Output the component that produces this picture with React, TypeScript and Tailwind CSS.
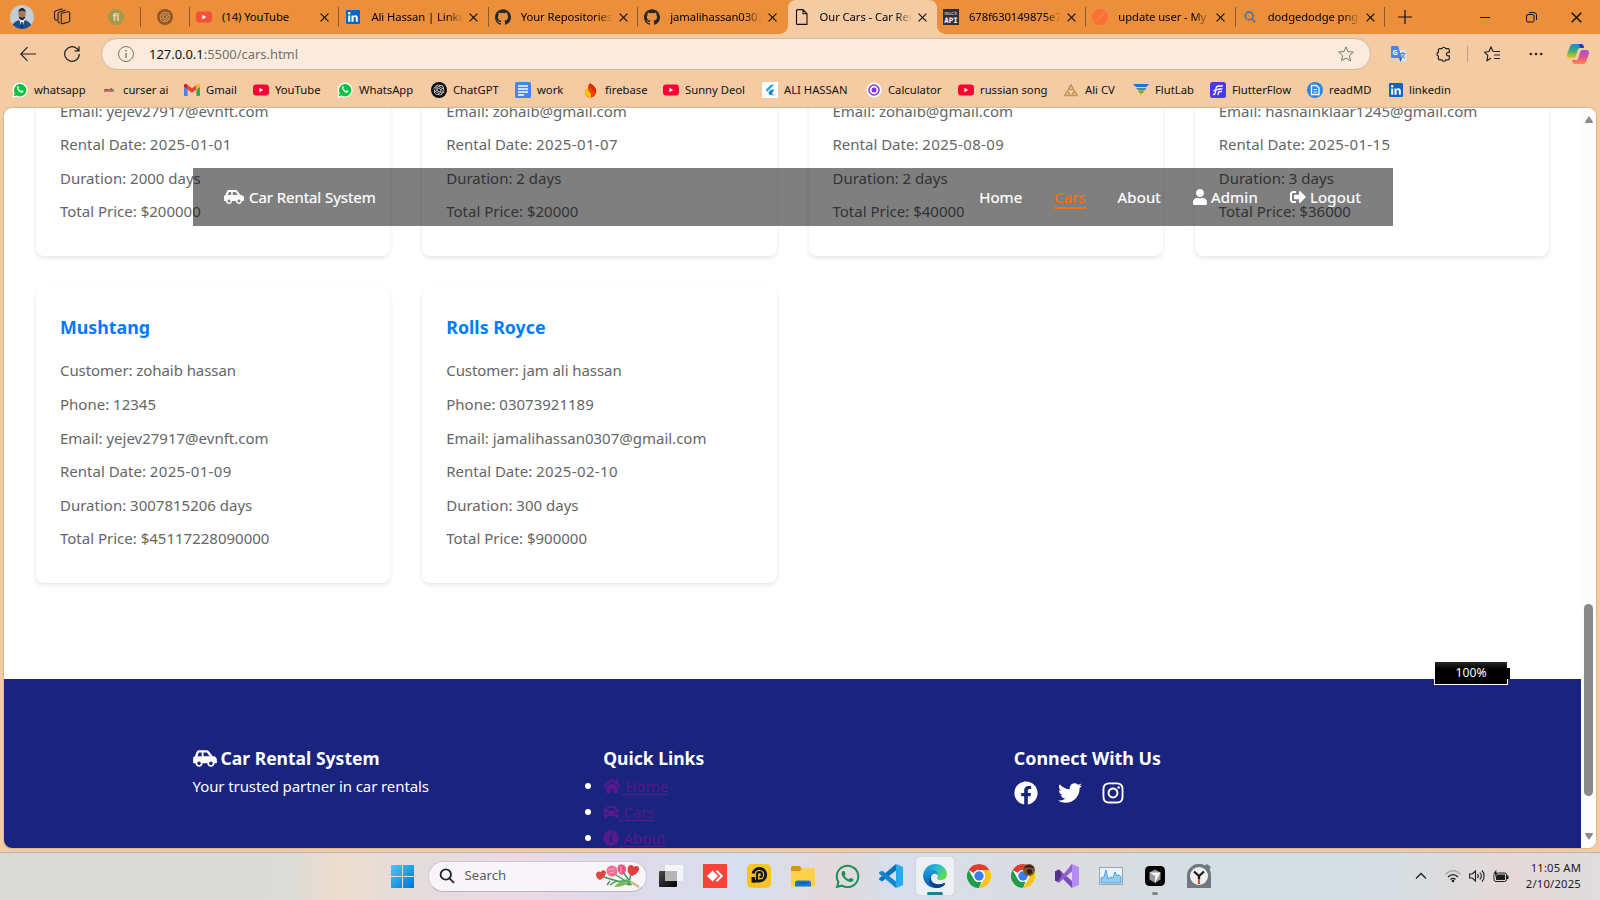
import React from "react";
import {
  FaCarSide, FaCar, FaUser, FaSignOutAlt, FaHome, FaInfoCircle, FaFacebook, FaTwitter, FaInstagram, FaWhatsapp,
} from "react-icons/fa";
import { SiPostman, SiOpenai, SiGithub, SiFlutter } from "react-icons/si";

type P = { className?: string };

const YouTube = ({ c = "#ff0033" }: { c?: string }) => (
  <svg viewBox="0 0 16 16" className="size-4 shrink-0"><rect x="0" y="2.5" width="16" height="11" rx="3" fill={c} /><path d="M6.4 5.8v4.4L10.2 8z" fill="#fff" /></svg>
);
const LinkedIn = () => (
  <svg viewBox="0 0 14 14" className="size-3.5 shrink-0"><rect width="14" height="14" rx="1" fill="#0a66c2" /><path d="M2.2 5.5h2v6.2h-2zM5.5 5.5h1.9v.9c.4-.7 1.1-1.1 2-1.1 1.800 0 2.400 1.100 2.400 2.900v3.500h-2V8.600c0-.9-.2-1.500-1-1.500s-1.200.6-1.200 1.500v3.100h-2.100z" fill="#fff" /><circle cx="3.200" cy="3.300" r="1.200" fill="#fff" /></svg>
);
const WhatsBadge = () => (
  <svg viewBox="0 0 16 16" className="size-4 shrink-0"><path d="M.5 15.700l1-4A7.500 7.500 0 1 1 4.500 14.700z" fill="#fff" /><path d="M1.800 14.300l.9-3.200A6.200 6.200 0 1 1 5 13.500z" fill="#0ac143" /><path d="M5.300 4.300c.5-.5 1-.3 1.200.2l.4 1c.1.300-.2.600-.5 1 .7 1.300 1.600 2 2.700 2.500.3-.4.600-.8.900-.7l1.300.7c.300.200.1 1.100-.5 1.500-2.600 1.500-7-3.400-5.500-6.200z" fill="#fff" /></svg>
);
const Gmail = () => (
  <svg viewBox="0 0 16 12" className="h-3 w-4 shrink-0"><path d="M1 12h2.600V5.500L0 2.800V11a1 1 0 0 0 1 1z" fill="#4285f4" /><path d="M12.400 12H15a1 1 0 0 0 1-1V2.800l-3.600 2.700z" fill="#34a853" /><path d="M3.600 5.500V1L8 4.300 12.400 1v4.500L8 8.800z" fill="#ea4335" /><path d="M0 2.800V1.500C0 .1 1.500-.5 2.600.3l1 .7v4.500z" fill="#c5221f" /><path d="M12.400 1l1-.7c1.100-.8 2.600-.2 2.600 1.200v1.300l-3.600 2.700z" fill="#fbbc04" /></svg>
);
const GPT = ({ bg, fg }: { bg: string; fg: string }) => (
  <svg viewBox="0 0 16 16" className="size-4 shrink-0"><circle cx="8" cy="8" r="8" fill={bg} /><g transform="translate(2.500 2.500)"><SiOpenai size={11} color={fg} /></g></svg>
);
const Docs = () => (
  <svg viewBox="0 0 16 16" className="size-4 shrink-0"><rect width="16" height="16" rx="1.500" fill="#4285f4" /><path d="M3 4h10M3 7h10M3 10h10M3 13h6" stroke="#fff" strokeWidth="1.500" /></svg>
);
const Fire = () => (
  <svg viewBox="0 0 16 16" className="size-4 shrink-0"><path d="M7 1c5 3 7 6 6 10-1 3-3 4.500-6 4.500C3 15.500 1.500 11 3 7c1 1 1.500 1 2 1 0-3 0-5 2-7z" fill="#dd2c00" /><path d="M3 6c-2 5 0 9.500 5 9.500C9 11 6 9 3 6z" fill="#ffc400" /><path d="M5 8c3 1 4.500 4 3 7.500 3-.5 4-2 4-4L6 4z" fill="#ff6a00" opacity=".45" /></svg>
);
const Flutter = () => (
  <svg viewBox="0 0 16 16" className="size-4 shrink-0"><rect width="16" height="16" fill="#fff" /><g transform="translate(2.500 2.500)"><SiFlutter size={11} color="#27a5ee" /></g><path d="M7.200 10.800l2.200-2.200 3 0-4.400 4.400h-1z" fill="#0b5394" opacity=".6" /></svg>
);
const Target = () => (
  <svg viewBox="0 0 16 16" className="size-4 shrink-0"><circle cx="8" cy="8" r="7.500" fill="#fff" /><circle cx="8" cy="8" r="5" fill="none" stroke="#7a35dd" strokeWidth="1.500" /><circle cx="8" cy="8" r="2.500" fill="#7a35dd" /></svg>
);
const Tent = () => (
  <svg viewBox="0 0 16 16" className="size-4 shrink-0" fill="none" stroke="#c09858" strokeWidth="1.500"><path d="M5.500 7L8 3l2.500 4M2 13l2.500-4L7 13M9 13l2.500-4 2.500 4M1 13.500h14M5 7.500h6" /></svg>
);
const FlutLab = () => (
  <svg viewBox="0 0 16 16" className="size-4 shrink-0"><path d="M0 2h16l-2.500 3H3z" fill="#1976d2" /><path d="M3 6h10.500l-2 2.500H5.500z" fill="#4a8a8a" /><path d="M5.500 9.200h5.500l-4 6V11z" fill="#f0d000" /><path d="M5 9.200h6l-1.500 2H7z" fill="#679a55" /></svg>
);
const FlutterFlow = () => (
  <svg viewBox="0 0 16 16" className="size-4 shrink-0"><rect width="16" height="16" rx="2.500" fill="#4b39ef" /><path d="M3.500 12.500c1 0 1.500-.5 1.700-1.500l.8-4.500c.3-1.500 1-2.500 2.500-2.500h4M4 8.500c3 0 3-1.500 5.500-1.500h2.500M8 12.500c.3-2 .3-3 2-3h1.500" stroke="#fff" strokeWidth="1.300" fill="none" strokeLinecap="round" /></svg>
);
const ReadMD = () => (
  <svg viewBox="0 0 16 16" className="size-4 shrink-0"><circle cx="8" cy="8" r="8" fill="#2f86dd" /><path d="M4.500 3.500h5l2.500 2.500v6.500h-7.500z" fill="none" stroke="#fff" strokeWidth="1.300" /><path d="M6.500 7.500h3.500M6.500 10h3.500" stroke="#fff" /></svg>
);
const MockApi = () => (
  <svg viewBox="0 0 16 16" className="size-4 shrink-0"><rect width="16" height="16" fill="#2d2d33" /><text x="8" y="6" fontSize="5.500" textAnchor="middle" fill="#ddd" fontFamily="Liberation Mono">mock</text><text x="8" y="13.800" fontSize="7.500" fontWeight="700" textAnchor="middle" fill="#fff" fontFamily="DejaVu Sans Mono">API</text></svg>
);
const Page = () => (
  <svg viewBox="0 0 16 16" className="size-4 shrink-0" fill="none" stroke="#111" strokeWidth="1.100"><path d="M3.500.6h5.500l4 4.200v10.600h-9.500a1 1 0 0 1-1-1V1.600a1 1 0 0 1 1-1zM9 .8v4h4" /></svg>
);
const Search = ({ c, className }: { c: string; className: string }) => (
  <svg viewBox="0 0 16 16" className={className} fill="none" stroke={c} strokeWidth="1.800"><circle cx="6.800" cy="6.500" r="5.200" /><path d="M10.600 10.400l4.400 4.600" /></svg>
);
const Close = ({ className = "size-[9px]" }: P) => (
  <svg viewBox="0 0 9 9" className={className} stroke="#111" strokeWidth="1.200" fill="none"><path d="M.6.6l7.800 7.800M8.400.6L.6 8.400" /></svg>
);

const tabs = [
  { icon: <YouTube c="#f4513a" />, t: "(14) YouTube", fade: false },
  { icon: <LinkedIn />, t: "Ali Hassan | LinkedIn", fade: true },
  { icon: <SiGithub size={16} color="#24292f" />, t: "Your Repositories", fade: true },
  { icon: <SiGithub size={16} color="#24292f" />, t: "jamalihassan0307", fade: true },
  { icon: <Page />, t: "Our Cars - Car Rental", fade: true, active: true },
  { icon: <MockApi />, t: "678f630149875e7", fade: true },
  { icon: <SiPostman size={16} color="#ff6c37" />, t: "update user - My W", fade: true },
  { icon: <Search c="#1a6fd0" className="size-3" />, t: "dodgedodge png i", fade: true },
];

function TabBar() {
  return (
    <div className="flex h-[34px] items-center bg-[#eb8f3b]">
      <div className="ml-[10px] size-6 shrink-0 overflow-hidden rounded-full bg-[#c3ccd4]">
        <svg viewBox="0 0 24 24"><path d="M2 22c1-5 5-6 7-7h6c3 1 6 3 7 7v2H2z" fill="#1d4f86" /><path d="M9 14l3 9 3-9z" fill="#eef" /><path d="M11.300 17h1.400l.6 6h-2.600z" fill="#17365c" /><ellipse cx="12" cy="9" rx="3.600" ry="5.500" fill="#a87860" /><path d="M8.300 7.500c0-6 7.500-6 7.400 0-1-2.500-6.400-2.500-7.400 0zM8.700 11.500c1 5 5.600 5 6.600 0-1.500 1.500-5.100 1.500-6.600 0z" fill="#29211f" /></svg>
      </div>
      <svg viewBox="0 0 18 18" className="ml-[19px] size-[18px] shrink-0" fill="none" stroke="#222" strokeWidth="1.100"><path d="M8.200 6.500a1 1 0 0 1 .7-1.200l5.800-1.500a1.500 1.500 0 0 1 2 1.500v7.200a1.500 1.500 0 0 1-1.200 1.500l-5.500 1.600a1.300 1.300 0 0 1-1.800-1.300zM7 15l-1-.3a2 2 0 0 1-1-1.500V6a2 2 0 0 1 1.500-1.800L12.500 2M4 12.500l-1.500-.8a2 2 0 0 1-1-1.500V4.500A2 2 0 0 1 3 2.800L9.500.9" /></svg>
      <div className="ml-[37px] flex size-4 items-center justify-center rounded-full bg-[#a19a4c] text-[10px] font-bold text-[#f5d2a8]">fi</div>
      <div className="ml-4 h-5 w-px bg-[#8e5a2b]" />
      <div className="ml-4 w-4"><GPT bg="#8e5726" fg="#eda565" /></div>
      <div className="ml-4 h-5 w-px shrink-0 bg-[#8e5a2b]" />
      {tabs.map((t, i) => (
        <div
          key={i}
          className={
            "relative flex h-[34px] w-[149.400px] shrink-0 items-center " +
            (t.active ? "rounded-t-lg bg-[#f4cba3]" : "")
          }
        >
          {t.active && (
            <>
              <span className="absolute bottom-0 -left-2 size-2 bg-[radial-gradient(circle_at_0_0,transparent_7.500px,#f4cba3_8px)]" />
              <span className="absolute -right-2 bottom-0 size-2 bg-[radial-gradient(circle_at_100%_0,transparent_7.500px,#f4cba3_8px)]" />
            </>
          )}
          <div className="ml-[6px] flex w-4 justify-center">{t.icon}</div>
          <div
            className={
              "ml-[10px] w-[92px] overflow-hidden text-[11.250px] tracking-[-0.08px] whitespace-nowrap text-black " +
              (t.fade ? "[mask-image:linear-gradient(to_right,#000_76px,transparent_92px)]" : "")
            }
          >
            {t.t}
          </div>
          <div className="ml-[6px]"><Close /></div>
          {i !== 3 && i !== 4 && <div className="ml-auto h-5 w-px bg-[#8e5a2b]" />}
        </div>
      ))}
      <svg viewBox="0 0 14 14" className="ml-[13px] size-3.5 shrink-0" stroke="#111" strokeWidth="1.200"><path d="M7 0v14M0 7h14" /></svg>
      <svg viewBox="0 0 10 10" className="ml-[68px] size-2.5 shrink-0" stroke="#111"><path d="M0 5.500h10" /></svg>
      <svg viewBox="0 0 11 11" className="ml-9 size-[11px] shrink-0" stroke="#111" fill="none"><rect x=".5" y="2.500" width="7.500" height="7.500" rx="1.500" /><path d="M3 .6h5a2.500 2.500 0 0 1 2.500 2.500v5" /></svg>
      <div className="ml-[34px]"><Close className="size-[11px]" /></div>
    </div>
  );
}

function Toolbar() {
  return (
    <div className="flex h-10 items-center">
      <svg viewBox="0 0 16 16" className="ml-5 size-4 shrink-0" fill="none" stroke="#222" strokeWidth="1.200"><path d="M16 8H1M7.500 1.200L.8 8l6.700 6.800" /></svg>
      <svg viewBox="0 0 16 16" className="ml-7 size-4 shrink-0" fill="none" stroke="#222" strokeWidth="1.200"><path d="M15.300 8A7.300 7.300 0 1 1 12.800 2.500L14.800 4.500M15 .3v4.500h-4.500" /></svg>
      <div className="ml-[21px] flex h-8 w-[1270px] shrink-0 items-center rounded-full border border-[#cdb9a5] bg-[#fbebdc]">
        <svg viewBox="0 0 16 16" className="ml-4 size-4" fill="none" stroke="#7b746d"><circle cx="8" cy="8" r="7.500" /><path d="M8 7v5M8 4v1.500" strokeWidth="1.300" /></svg>
        <div className="ml-[15px] pt-px text-[13px] tracking-[-0.04px] text-[#77706a]"><span className="text-[#111]">127.0.0.1</span>:5500/cars.html</div>
        <svg viewBox="0 0 16 16" className="mr-4 ml-auto size-4" fill="none" stroke="#7b746d"><path d="M8 .9l2.100 4.700 5.200.5-3.900 3.500 1.100 5.100L8 12.100l-4.500 2.600 1.100-5.100L.7 6.100l5.200-.5z" strokeLinejoin="round" /></svg>
      </div>
      <svg viewBox="0 0 16 16" className="ml-[20px] size-4 shrink-0"><path d="M7 4h8.300v11.500H9z" fill="#dbe3ec" /><path d="M0 1a1 1 0 0 1 1-1h6l4 12H1a1 1 0 0 1-1-1z" fill="#4487f4" /><path d="M8 12h3l-1.500 4z" fill="#2852b8" /><text x="1.500" y="8.800" fontSize="7" fontWeight="700" fill="#fff" fontFamily="Noto Sans">G</text><path d="M9.500 7.500h5M12 6v1.500M10 12c2-1 3-2.500 3.300-4.500M10.500 8.500c1 2 2 3 3.500 3.500" stroke="#6a7c94" fill="none" /></svg>
      <svg viewBox="0 0 16 16" className="ml-[28px] size-4 shrink-0" fill="none" stroke="#222" strokeWidth="1.200"><path d="M4.700 2.700h2.300a1.900 1.900 0 0 1 3.700 0h2.300a1.300 1.300 0 0 1 1.300 1.300v2.400h-1.200a1.700 1.700 0 0 0 0 3.400h1.200v2.700a1.300 1.300 0 0 1-1.300 1.300h-2.300a1.900 1.900 0 0 1-3.700 0H4.700a1.300 1.300 0 0 1-1.300-1.300V10a1.900 1.900 0 0 1 0-3.700V4a1.300 1.300 0 0 1 1.300-1.300z" /></svg>
      <div className="ml-4 h-4 w-px bg-[#c29e7d]" />
      <svg viewBox="0 0 16 16" className="ml-4 size-4 shrink-0" fill="none" stroke="#222" strokeWidth="1.200"><path d="M9 5.500L7 1 5 5.500l-4.500.7 3.300 3.200L3 14.500l4-2.300M9 5.500h7M10 9h6M10 12.500h6" /></svg>
      <svg viewBox="0 0 14 4" className="ml-[29px] h-1 w-[14px] shrink-0" fill="#222"><circle cx="1.800" cy="2" r="1.300" /><circle cx="7" cy="2" r="1.300" /><circle cx="12.200" cy="2" r="1.300" /></svg>
      <svg viewBox="0 0 22 20" className="ml-[24px] h-5 w-[22px] shrink-0">
        <defs>
          <linearGradient id="cp1" x1="0" y1="0" x2="0" y2="1"><stop offset="0" stopColor="#1787e0" /><stop offset=".5" stopColor="#35b06a" /><stop offset="1" stopColor="#f1c21b" /></linearGradient>
          <linearGradient id="cp2" x1="0" y1="0" x2="0" y2="1"><stop offset="0" stopColor="#9a56e0" /><stop offset=".5" stopColor="#e3508f" /><stop offset="1" stopColor="#ff8a4a" /></linearGradient>
        </defs>
        <path d="M6 0h8c2 0 2.500 1.500 3 4h-4c-2 0-2.500 2-3.500 6-.8 3-1.500 4-3.500 4H3c-3 0-3.500-2-2.500-5L3 2.500C3.500.8 4.500 0 6 0z" fill="url(#cp1)" />
        <path d="M16 20H8c-2 0-2.500-1.500-3-4h4c2 0 2.500-2 3.500-6 .8-3 1.500-4 3.500-4h3c3 0 3.500 2 2.500 5L19 17.500c-.5 1.700-1.500 2.500-3 2.500z" fill="url(#cp2)" />
        <path d="M12 0h2c2 0 2.500 1.500 3 4h-4z" fill="#1b3fb5" />
      </svg>
    </div>
  );
}

const marks = [
  { w: "w-[89px]", i: <WhatsBadge />, t: "whatsapp" },
  { w: "w-[83px]", i: <span className="w-4 text-center text-[6px] font-bold text-[#4a3828]">mh</span>, t: "curser ai" },
  { w: "w-[69px]", i: <Gmail />, t: "Gmail" },
  { w: "w-[84px]", i: <YouTube />, t: "YouTube" },
  { w: "w-[94px]", i: <WhatsBadge />, t: "WhatsApp" },
  { w: "w-[84px]", i: <GPT bg="#0c0c0c" fg="#fff" />, t: "ChatGPT" },
  { w: "w-[68px]", i: <Docs />, t: "work" },
  { w: "w-[80px]", i: <Fire />, t: "firebase" },
  { w: "w-[99px]", i: <YouTube />, t: "Sunny Deol" },
  { w: "w-[104px]", i: <Flutter />, t: "ALI HASSAN" },
  { w: "w-[92px]", i: <Target />, t: "Calculator" },
  { w: "w-[105px]", i: <YouTube />, t: "russian song" },
  { w: "w-[70px]", i: <Tent />, t: "Ali CV" },
  { w: "w-[77px]", i: <FlutLab />, t: "FlutLab" },
  { w: "w-[97px]", i: <FlutterFlow />, t: "FlutterFlow" },
  { w: "w-[82px]", i: <ReadMD />, t: "readMD" },
  { w: "w-[80px]", i: <LinkedIn />, t: "linkedin" },
];

function Bookmarks() {
  return (
    <div className="flex h-[34px] items-center pb-[2px] pl-3 text-[11.250px] whitespace-nowrap text-[#111]">
      {marks.map((m, i) => (
        <div key={i} className={"flex shrink-0 items-center gap-1.5 " + m.w}>
          {m.i}
          <span>{m.t}</span>
        </div>
      ))}
    </div>
  );
}

const rentals = [
  { mail: "yejev27917@evnft.com", date: "2025-01-01", dur: "2000", price: "200000" },
  { mail: "zohaib@gmail.com", date: "2025-01-07", dur: "2", price: "20000" },
  { mail: "zohaib@gmail.com", date: "2025-08-09", dur: "2", price: "40000" },
  { mail: "hasnainklaar1245@gmail.com", date: "2025-01-15", dur: "3", price: "36000" },
  { name: "Mushtang", who: "zohaib hassan", phone: "12345", mail: "yejev27917@evnft.com", date: "2025-01-09", dur: "3007815206", price: "45117228090000" },
  { name: "Rolls Royce", who: "jam ali hassan", phone: "03073921189", mail: "jamalihassan0307@gmail.com", date: "2025-02-10", dur: "300", price: "900000" },
];

function Cards() {
  return (
    <div className="-mt-[33.300px] grid grid-cols-4 gap-8 px-8">
      {rentals.map((r, i) => (
        <div key={i} className="rounded-lg bg-white px-6 pt-6 pb-[22.700px] shadow-[0_2px_4px_rgba(0,0,0,0.1)]">
          {r.name && (
            <>
              <h3 className="mb-4 text-[17.800px] leading-[30.700px] font-bold text-[#007bff]">{r.name}</h3>
              <p className="mb-2 leading-[25.600px] tracking-[-0.07px]">Customer: {r.who}</p>
              <p className="mb-2 leading-[25.600px]">Phone: {r.phone}</p>
            </>
          )}
          <p className="mb-2 leading-[25.600px]">Email: {r.mail}</p>
          <p className="mb-2 leading-[25.600px]">Rental Date: <span className="tracking-[0.35px]">{r.date}</span></p>
          <p className="mb-2 leading-[25.600px]">Duration: {r.dur} days</p>
          <p className="mb-2 leading-[25.600px]">Total Price: ${r.price}</p>
        </div>
      ))}
    </div>
  );
}

function Nav() {
  return (
    <nav className="absolute top-[60px] left-[189px] flex h-[58px] w-[1200px] items-center bg-black/50 pr-8 pl-[31px] text-[15px] text-white">
      <FaCarSide className="h-4 w-5" />
      <span className="ml-[5px] tracking-[-0.06px] [-webkit-text-stroke:0.2px_white]">Car Rental System</span>
      <div className="ml-auto flex items-center gap-8">
        <span className="tracking-[0.1px] [-webkit-text-stroke:0.2px_white]">Home</span>
        <span className="relative text-[#ff6f00]">Cars<i className="absolute top-[21px] left-0 h-0.5 w-full bg-[#ff6f00]" /></span>
        <span className="tracking-[0.15px] [-webkit-text-stroke:0.2px_white]">About</span>
        <span className="flex items-center gap-1 tracking-[0.2px] [-webkit-text-stroke:0.2px_white]"><FaUser className="h-4 w-3.5" />Admin</span>
        <span className="flex items-center gap-1 tracking-[0.2px] [-webkit-text-stroke:0.2px_white]"><FaSignOutAlt className="size-4" />Logout</span>
      </div>
    </nav>
  );
}

function Footer() {
  const links = [
    { i: <FaHome className="h-4 w-[18px]" />, t: "Home" },
    { i: <FaCar className="size-4" />, t: "Cars" },
    { i: <FaInfoCircle className="size-4" />, t: "About" },
  ];
  return (
    <footer className="h-[170px] bg-[#1a237e] text-[15px] text-white">
      <div className="ml-[188.500px] grid w-[1200px] grid-cols-3 gap-8 pt-16">
        <div>
          <h3 className="flex h-[30px] items-center gap-1 text-[17.550px] font-bold"><FaCarSide className="h-[19px] w-6" />Car Rental System</h3>
          <p className="leading-[26px] tracking-[-0.09px]">Your trusted partner in car rentals</p>
        </div>
        <div>
          <h3 className="flex h-[30px] items-center text-[17.550px] font-bold">Quick Links</h3>
          <ul>
            {links.map((l) => (
              <li key={l.t} className="relative flex h-[26px] items-center text-[#551a8b]">
                <span className="absolute -left-[18.500px] size-1.5 rounded-full bg-white" />
                {l.i}
                <span className="underline underline-offset-2"><span className="whitespace-pre tracking-[0.4px]"> </span>{l.t}</span>
              </li>
            ))}
          </ul>
        </div>
        <div>
          <h3 className="flex h-[30px] items-center text-[17.850px] font-bold">Connect With Us</h3>
          <div className="mt-2 flex items-center gap-5">
            <FaFacebook className="size-6" /><FaTwitter className="size-6" /><FaInstagram className="-ml-px size-6" />
          </div>
        </div>
      </div>
    </footer>
  );
}

const ChromeIcon = ({ badge }: { badge?: boolean }) => (
  <svg viewBox="0 0 24 24" className="size-6"><circle cx="12" cy="12" r="12" fill="#fff" /><path d="M12 0a12 12 0 0 1 10.400 6H12a6 6 0 0 0-5.200 3L1.600 6A12 12 0 0 1 12 0z" fill="#e33b2e" /><path d="M22.400 6A12 12 0 0 1 12 24l5.200-9a6 6 0 0 0 0-6l-1.700-3z" fill="#fcc31e" /><path d="M1.600 6l5.200 9a6 6 0 0 0 5.200 3l2.600-.5L12 24A12 12 0 0 1 1.600 6z" fill="#1f9d4c" /><circle cx="12" cy="12" r="6" fill="#fff" /><circle cx="12" cy="12" r="4.700" fill="#3b7ded" />{badge && <><circle cx="18" cy="6" r="6" fill="#7a5232" /><path d="M13 4c2-4 9-3 10 0-3-1-7-1-10 0z" fill="#2a1a10" /><circle cx="18.500" cy="7.500" r="2.500" fill="#2a1a10" /></>}</svg>
);

const apps: React.ReactNode[] = [
  <svg viewBox="0 0 24 24" className="size-6"><defs><linearGradient id="tv" x1="0" y1="0" x2="1" y2="1"><stop offset="0" stopColor="#4a4a4a" /><stop offset="1" stopColor="#000" /></linearGradient></defs><rect y="7" width="18" height="16" rx="1" fill="url(#tv)" /><rect x="6" y="1" width="18" height="16" rx="1" fill="#f7f7f7" opacity=".9" /><rect x="6" y="7" width="12" height="10" fill="#b5b5b5" /></svg>,
  <svg viewBox="0 0 24 24" className="size-6"><rect width="24" height="24" fill="#fc4136" /><path d="M9.500 6.500L15 12l-5.500 5.500L4 12z" fill="#fff" /><path d="M13.500 6.800l5.200 5.200-5.200 5.200" fill="none" stroke="#fff" strokeWidth="2" /></svg>,
  <svg viewBox="0 0 24 24" className="size-6"><rect width="24" height="24" rx="5" fill="#f7c51d" /><path d="M6.200 9.500A6.300 6.300 0 1 1 12.500 17H6" fill="none" stroke="#161616" strokeWidth="3" /><path d="M4.500 13h3.500v5.500H4.500z" fill="#161616" /><path d="M10 18V10.500a2.500 2.500 0 1 1 2.500 2.700" fill="none" stroke="#161616" strokeWidth="2.200" /></svg>,
  <svg viewBox="0 0 24 24" className="size-6"><path d="M0 3.500A1.500 1.500 0 0 1 1.500 2H9l2 3h12a1 1 0 0 1 1 1v6H0z" fill="#d8960f" /><path d="M0 7h9l2-3h12a1 1 0 0 1 1 1v16a1.500 1.500 0 0 1-1.500 1.500h-21A1.500 1.500 0 0 1 0 21z" fill="#ffd04a" /><path d="M4 22.500V19a2.500 2.500 0 0 1 2.500-2.500h11A2.500 2.500 0 0 1 20 19v3.500z" fill="#1278cf" /><path d="M8 19h8" stroke="#0a579e" strokeWidth="1.300" /></svg>,
  <FaWhatsapp className="size-[27px] text-[#1a8f55]" />,
  <svg viewBox="0 0 24 24" className="size-6"><path d="M17 0l7 3v18l-7 3z" fill="#29a8f0" /><path d="M17 0v6.500L3 17.500 0 15.500v-1z" fill="#0a72b8" /><path d="M17 24v-6.500L3 6.500 0 8.500v1z" fill="#1187cf" /></svg>,
  <svg viewBox="0 0 24 24" className="size-6"><defs><linearGradient id="ed" x1="0" y1="0" x2="1" y2=".6"><stop offset="0" stopColor="#1585d8" /><stop offset=".5" stopColor="#28b9d8" /><stop offset="1" stopColor="#62dc4a" /></linearGradient><linearGradient id="ed2" x1="0" y1="0" x2="0" y2="1"><stop offset="0" stopColor="#1b9de2" /><stop offset="1" stopColor="#0c55a4" /></linearGradient></defs><path d="M.3 10C1.500 4 6.500 0 12.200 0 19 0 24 5 24 10.200c0 3.800-3 5.800-6.300 5.800-2.800 0-4.200-.9-3.500-2 1.600-2.500-.2-6-4.200-6C5 8 .5 9 .3 10z" fill="url(#ed)" /><path d="M.2 10.500C1 7 4.500 5.500 8.500 5.500c4.500 0 6.500 3 6.200 6C13.500 9 8 9 8 14c0 4.500 5 8 12.500 5.500 1-.4 2 .2 1.200 1.200C19.500 23 15.500 24.300 12 24 4.500 23.500-.6 17 .2 10.500z" fill="url(#ed2)" /><path d="M8 13c-1.500 5 4 9.500 12.500 6.500 1-.4 2 .2 1.200 1.200C19.500 23 16 24 13 24 7 22 4.500 16 8 13z" fill="#0b3f85" /></svg>,
  <ChromeIcon />,
  <ChromeIcon badge />,
  <svg viewBox="0 0 24 24" className="size-6"><path d="M17 0l7 3v18l-7 3z" fill="#b78cf0" /><path d="M17 0v7L4 18.500 0 16.500V7.500L4 5.500l13 11.500v7L8 15l-4.500 3.500z" fill="#7b4fb8" /><path d="M0 7.500l4-2 2 2.300v8.400l-2 2.300-4-2z" fill="#56318d" /><path d="M17 0v7L4 18.500l-1-1.500z" fill="#9163d0" /></svg>,
  <svg viewBox="0 0 24 24" className="size-6"><rect x=".5" y="3.500" width="23" height="17" fill="#e8f3fb" stroke="#9aa7b2" /><path d="M2 19v-5l3-1 2-7 2 9 3-2 2 1 2-6 2 4 2-1 2 2v6z" fill="#93cdf3" stroke="#3592d6" strokeWidth=".8" /></svg>,
  <svg viewBox="0 0 24 24" className="size-6"><rect x="2" y="2" width="20" height="20" rx="4.500" fill="#050505" /><path d="M12 5.500l5.500 3v7L12 19l-5.500-3.500v-7z" fill="#9a9a9a" /><path d="M6.500 8.500h11L12 19v-7z" fill="#f2f2f2" /></svg>,
  <svg viewBox="0 0 24 24" className="size-6"><path d="M0 24V12a12 12 0 0 1 18-10.500L20 0l4 3-1.500 2c1 2 1.500 4 1.500 7v12z" fill="#6f7880" /><circle cx="12" cy="12" r="9" fill="#efefef" /><path d="M12 12v8" stroke="#e2542a" strokeWidth="2.200" /><path d="M7 7.500l5 4.500 5-4.500M12 12v3" stroke="#1b1b1b" strokeWidth="2.200" fill="none" /></svg>,
];

function Taskbar() {
  return (
    <div className="flex h-12 items-center border-t border-[#b5b3bb] bg-[linear-gradient(90deg,#dadad7_0%,#dbdbda_18%,#ecdccb_21%,#e4dcdc_26%,#ecd9e3_32%,#dfd9e8_38%,#d6dfee_47%,#e3d9da_52%,#d6deeb_56%,#dcdcdf_66%,#d2dfe4_77%,#d6dee2_87%,#e4d9d8_94%,#dedcdc_100%)] pb-px">
      <svg viewBox="0 0 23 23" className="ml-[391px] size-[23px] shrink-0"><defs><linearGradient id="wn" x1="0" y1="0" x2="1" y2="1"><stop offset="0" stopColor="#4cc8f5" /><stop offset="1" stopColor="#0073d1" /></linearGradient></defs><path d="M0 0h11v11H0zM12 0h11v11H12zM0 12h11v11H0zM12 12h11v11H12z" fill="url(#wn)" /></svg>
      <div className="ml-[13.500px] flex h-[31px] w-[219px] shrink-0 items-center rounded-full border border-[#cfc9d3] border-b-[#b9b3bf] bg-[#f8f5fa]">
        <Search c="#222" className="ml-2.5 size-4" />
        <span className="ml-[10px] text-[13.200px] text-[#5c5c5c]">Search</span>
        <svg viewBox="0 0 44 24" className="mr-1.5 ml-auto h-6 w-11" fill="none">
          <path d="M8 13l26 8M17 9l19 12M27 8l8 11M35 9l-2 11M14 17l-3 4M14 21c6-5 10-4 18-4" stroke="#3f9a52" strokeWidth="1.400" />
          <path d="M18 23c4-5 8-6 13-4-4 3-8 4-13 4zM29 15l5 1 2 5z" fill="#79b750" /><path d="M35 18l8 5" stroke="#d6b98c" strokeWidth="2.500" />
          <path d="M0 10c1-3 3-3 5-2 1-3 5-2 5 1-1 4-4 6-6 7-3-1-4-3-4-6z" fill="#e2453f" />
          <circle cx="16" cy="7" r="5.500" fill="#ee6d95" /><path d="M12 6c3-2 4 1 7-2M13 10c2-3 4 0 6-3" stroke="#f9aec5" />
          <path d="M22 2c3-3 8-1 8 3 0 3-2 5-4 6-4-2-5-6-4-9z" fill="#ea527d" /><path d="M25 2v7" stroke="#fba8bb" />
          <path d="M32 3c2-3 5-2 6 0 2-2 6-1 5 3-1 3-4 5-7 6-4-2-5-5-4-9z" fill="#df4040" />
        </svg>
      </div>
      <div className="ml-[2.500px] flex">
        {apps.map((a, i) => (
          <div key={i} className="flex w-11 justify-center">
            <div className={"relative flex h-[38px] w-[38px] items-center justify-center rounded " + (i === 6 ? "bg-[#edf0f5] shadow-[0_0_1px_#aaa]" : "")}>
              {a}
              {i === 6 && <span className="absolute bottom-0 h-[3px] w-4 rounded-full bg-[#21808f]" />}
              {i === 11 && <span className="absolute bottom-0 h-[3px] w-1.5 rounded-full bg-[#858585]" />}
            </div>
          </div>
        ))}
      </div>
      <svg viewBox="0 0 12 8" className="mr-[18px] ml-auto h-2 w-3" fill="none" stroke="#222" strokeWidth="1.300"><path d="M1 6.500l5-5 5 5" /></svg>
      <svg viewBox="0 0 16 14" className="h-3.5 w-4" fill="none" stroke="#1d1d1d" strokeWidth="1.300"><path d="M.5 5.500c4.500-5 10.500-5 15 0" stroke="#aaa" /><path d="M3 8c3-3.300 7-3.300 10 0M5.500 10.500c1.600-1.600 3.400-1.600 5 0" /><circle cx="8" cy="12" r="1.300" fill="#1d1d1d" stroke="none" /></svg>
      <svg viewBox="0 0 16 14" className="ml-2 h-3.5 w-4" fill="none" stroke="#1d1d1d" strokeWidth="1.100"><path d="M.6 5h2.700L6.500 2v10L3.300 9H.6zM8.500 5c1 1.200 1 2.800 0 4M10.800 3.500c1.800 2 1.800 5 0 7M13 1.500c2.800 3 2.800 8 0 11" /></svg>
      <svg viewBox="0 0 16 14" className="ml-2 h-3.5 w-4"><rect x="1" y="4" width="12.500" height="8.500" rx="2" fill="none" stroke="#1d1d1d" /><rect x="3" y="5.500" width="9" height="5.500" fill="#1d1d1d" /><path d="M14 6.500h1.500v3.500H14z" fill="#1d1d1d" /><path d="M3.500 0L0 5h2v3.500L5.500 3.500h-2z" fill="#1d1d1d" stroke="#dadada" strokeWidth=".5" /></svg>
      <div className="mr-[19px] ml-[14px] w-[58px] text-right text-[11.250px] leading-4 whitespace-nowrap text-[#1d1d1d]">
        <div className="tracking-[0.15px]">11:05 AM</div>
        <div className="-ml-2 tracking-[0.2px]">2/10/2025</div>
      </div>
    </div>
  );
}

export default function App() {
  return (
    <div className="flex h-[900px] w-[1600px] flex-col overflow-hidden bg-[#f4cba3] font-['Noto_Sans',sans-serif]">
      <TabBar />
      <Toolbar />
      <Bookmarks />
      <div className="relative mx-1 mb-1 flex h-[740px] shrink-0 overflow-hidden rounded-lg bg-white shadow-[0_0_2px_rgba(120,70,20,0.5)]">
        <main className="flex h-[740px] w-[1577px] flex-col overflow-hidden text-[15px] text-[#666]">
          <div className="flex h-[571px] shrink-0 flex-col overflow-hidden"><Cards /></div>
          <Footer />
        </main>
        <div className="flex w-[15px] flex-col items-center bg-[#fcfcfc]">
          <svg viewBox="0 0 8 7" className="mt-2 h-[7px] w-2" fill="#8a8a8a"><path d="M4 0l4 6q0 1-1 1H1Q0 7 0 6z" /></svg>
          <div className="mt-[481px] h-48 w-[9px] rounded-full bg-[#8a8a8a]" />
          <svg viewBox="0 0 8 7" className="mt-[37px] h-[7px] w-2" fill="#8a8a8a"><path d="M4 7l4-6q0-1-1-1H1Q0 0 0 1z" /></svg>
        </div>
        <Nav />
        <div className="absolute top-[554px] left-[1430px] flex h-[23px] w-[74px] items-center justify-center border-r border-b border-l border-white bg-linear-to-b from-[#2a2a2a] to-black to-50% text-[12.200px] text-white">
          100%
          <span className="absolute top-1.5 -right-[3px] h-[11px] w-[3px] bg-black" />
        </div>
      </div>
      <Taskbar />
    </div>
  );
}
